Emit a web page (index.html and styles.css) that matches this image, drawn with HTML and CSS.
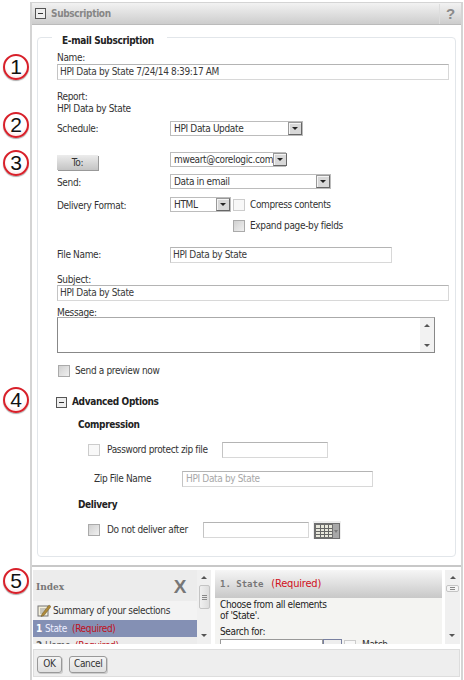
FILE: index.html
```html
<!DOCTYPE html>
<html lang="en">
<head>
<meta charset="utf-8">
<title>Subscription</title>
<link rel="stylesheet" href="styles.css">
</head>
<body>
<div class="callout c1">1</div>
<div class="callout c2">2</div>
<div class="callout c3">3</div>
<div class="callout c4">4</div>
<div class="callout c5">5</div>
<div class="dialog">
  <header class="titlebar">
    <span class="toggle"></span>
    <span class="title">Subscription</span>
    <span class="help">?</span>
  </header>
  <fieldset class="group">
    <legend>E-mail Subscription</legend>
    <div class="lbl name-lbl">Name:</div>
    <div class="input wide">HPI Data by State 7/24/14 8:39:17 AM</div>
    <div class="lbl report-lbl">Report:</div>
    <div class="lbl">HPI Data by State</div>

    <div class="row schedule-row">
      <span class="col">Schedule:</span>
      <div class="select s-schedule"><span>HPI Data Update</span><i class="drop"></i></div>
    </div>
    <div class="row to-row">
      <span class="col"><button class="to-btn">To:</button></span>
      <div class="select s-to"><span>mweart@corelogic.com</span><i class="drop"></i></div>
    </div>
    <div class="row send-row">
      <span class="col">Send:</span>
      <div class="select s-send"><span>Data in email</span><i class="drop"></i></div>
    </div>
    <div class="row format-row">
      <span class="col">Delivery Format:</span>
      <div class="select s-format"><span>HTML</span><i class="drop"></i></div>
      <i class="check light"></i><span class="check-text">Compress contents</span>
    </div>
    <div class="row expand-row">
      <span class="col"></span>
      <span class="spacer"></span>
      <i class="check"></i><span class="check-text">Expand page-by fields</span>
    </div>
    <div class="row file-row">
      <span class="col">File Name:</span>
      <div class="input filename">HPI Data by State</div>
    </div>
    <div class="lbl subject-lbl">Subject:</div>
    <div class="input wide">HPI Data by State</div>
    <div class="lbl message-lbl">Message:</div>
    <div class="textarea">
      <div class="ta-scroll"><i class="up"></i><i class="down"></i></div>
    </div>
    <div class="row preview-row">
      <i class="check"></i><span class="preview-text">Send a preview now</span>
    </div>
    <div class="row adv-row">
      <span class="toggle small"></span>
      <strong class="adv">Advanced Options</strong>
    </div>
    <div class="sub compression">Compression</div>
    <div class="row pw-row">
      <i class="check light"></i><span class="opt-text pw-text">Password protect zip file</span>
      <div class="input pw"></div>
    </div>
    <div class="row zip-row">
      <span class="zip-lbl">Zip File Name</span>
      <div class="input zip">HPI Data by State</div>
    </div>
    <div class="sub delivery">Delivery</div>
    <div class="row deliver-row">
      <i class="check"></i><span class="opt-text deliver-text">Do not deliver after</span>
      <div class="input date"></div>
      <button class="cal" aria-label="Calendar">
        <svg width="26" height="16" viewBox="0 0 26 16">
          <rect x="0" y="0" width="26" height="16" fill="#6f6f6f"/>
          <rect x="2" y="2" width="16" height="12" fill="#e8e8dc"/>
          <path d="M2 5.500H18M2 8.500H18M2 11.500H18M6.500 2V14M10.500 2V14M14.500 2V14" stroke="#666" stroke-width="1" fill="none"/>
          <rect x="19" y="1" width="6" height="14" fill="#a8a8a8"/>
          <path d="M20 7h4l-2 3z" fill="#7a7a7a"/>
        </svg>
      </button>
    </div>
  </fieldset>
  <div class="divider"></div>
  <section class="panels">
    <div class="index">
      <div class="index-head"><span class="index-title">Index</span><span class="close">X</span></div>
      <div class="item summary">
        <svg class="note" width="14" height="13" viewBox="0 0 14 13">
          <rect x="1" y="2" width="10" height="10" fill="#f4f0dc" stroke="#777"/>
          <path d="M3 5h6M3 7h6M3 9h4" stroke="#999"/>
          <path d="M5 10L12 1l2 1.500-7 9-3 1z" fill="#b08a3a" stroke="#6a5a2a" stroke-width=".5"/>
        </svg>
        <span>Summary of your selections</span>
      </div>
      <div class="item selected"><b>1</b><span class="st">State</span><span class="req">(Required)</span></div>
      <div class="item next"><b>2</b><span class="st">Home</span><span class="req">(Required)</span></div>
    </div>
    <div class="vscroll left-scroll"><i class="up"></i><i class="thumb"></i><i class="down"></i></div>
    <div class="detail">
      <div class="detail-head"><span class="detail-title">1. State</span><span class="req">(Required)</span></div>
      <div class="detail-text">Choose from all elements<br>of 'State'.</div>
      <div class="detail-search">Search for:</div>
      <div class="search-row">
        <div class="search-box"></div><div class="search-btn"></div><i class="check light"></i><span class="match">Match</span>
      </div>
    </div>
    <div class="vscroll right-scroll"><i class="up"></i><i class="thumb small"></i><i class="down"></i></div>
  </section>
  <footer class="footer">
    <button class="btn">OK</button>
    <button class="btn">Cancel</button>
  </footer>
</div>
</body>
</html>
```
FILE: styles.css
```css
html, body { margin: 0; padding: 0; }
body {
  width: 464px; height: 680px; overflow: hidden; position: relative;
  background: #fff; color: #333;
  font: 10px/12px "DejaVu Sans Condensed", "Liberation Sans", sans-serif;
  letter-spacing: -.35px;
}
i { display: block; flex: none; }
button { font: inherit; color: inherit; letter-spacing: inherit; padding: 0; margin: 0; }

.callout {
  position: absolute; left: 3px; width: 26px; height: 26px; box-sizing: border-box;
  border: 2px solid #d8202a; border-radius: 50%;
  background: radial-gradient(circle at 50% 40%, #fff 55%, #fbd0d0 100%);
  color: #111; font: 21px/22px "Liberation Sans", sans-serif; letter-spacing: 0; text-align: center;
  box-shadow: 0 1px 1px #aaa;
}
.c1 { top: 54px; }
.c2 { top: 112px; }
.c3 { top: 150px; }
.c4 { top: 387px; }
.c5 { top: 568px; }

.dialog {
  margin: 2px 1px 0 30px; width: 433px; height: 678px; box-sizing: border-box;
  border: solid #d4d4d4; border-width: 1px 2px 0 2px; overflow: hidden;
}
.titlebar {
  height: 22px; display: flex; align-items: center; padding-left: 3px;
  background: linear-gradient(#f2f2f2, #cdcdcd);
  border-bottom: 1px solid #bbb; box-sizing: border-box;
}
.toggle {
  width: 11px; height: 11px; box-sizing: border-box; border: 1px solid #555; background: #eee;
  position: relative; display: block; flex: none;
}
.toggle::after {
  content: ""; position: absolute; left: 2px; right: 2px; top: 4px; height: 1px; background: #333;
}
.title { margin-left: 5px; font-weight: 700; color: #868686; }
.help {
  margin-left: auto; width: 22px; text-align: center; font: 700 15px/20px "Liberation Sans", sans-serif;
  color: #8a8a8a; border-left: 1px solid #ddd; box-sizing: border-box;
}

.group {
  margin: 3px 4px 0 5px; padding: 0 0 0 19px; width: 419px; height: 529px; box-sizing: border-box;
  border: 1px solid #e2e6ea; border-radius: 4px; min-width: 0;
}
.group legend {
  margin-left: -5px; padding: 6px 13px 0 10px; font-weight: 700; color: #222; line-height: 13px;
}
.lbl { height: 12px; line-height: 12px; }
.name-lbl { margin-top: 5px; }
.input {
  height: 16px; line-height: 14px; box-sizing: border-box; padding-left: 2px;
  border: 1px solid #d8d8d8; border-top-color: #b4b4b4; border-left-color: #c4c4c4;
  background: #fff; white-space: nowrap; flex: none; color: #3a3a3a;
}
.wide { width: 392px; }
.report-lbl { margin-top: 11px; }

.row { display: flex; align-items: center; white-space: nowrap; }
.col { width: 113px; flex: none; }
.select {
  box-sizing: border-box; height: 15px; display: flex; align-items: center; justify-content: space-between;
  border: 1px solid #bcbcbc; padding-left: 3px; flex: none; background: #fff; line-height: 13px;
}
.drop {
  width: 14px; height: 13px; box-sizing: border-box; position: relative;
  background: #d8d8d8; border: 1px solid #777; border-color: #999 #666 #666 #999;
  box-shadow: inset 1px 1px 0 #f4f4f4;
}
.drop::after {
  content: ""; position: absolute; left: 3px; top: 4px;
  border: 3px solid transparent; border-top: 3px solid #222; border-bottom: 0;
}
.schedule-row { height: 15px; margin-top: 6px; }
.schedule-row .col { padding-top: 1px; }
.s-schedule { width: 133px; }
.to-row { height: 18px; margin-top: 16px; }
.to-row .select { margin-top: -4px; }
.to-btn {
  display: block; width: 41px; height: 15px; margin-top: 2px; line-height: 13px; text-align: center;
  border: 0; background: linear-gradient(#ececec, #c4c4c4);
  box-shadow: 1px 1px 0 #999;
}
.s-to { width: 116px; }
.send-row { height: 15px; margin-top: 4px; }
.send-row .col, .format-row .col { padding-top: 3px; }
.s-send { width: 161px; }
.format-row { height: 15px; margin-top: 8px; }
.s-format { width: 61px; }
.check {
  width: 12px; height: 12px; box-sizing: border-box; border: 1px solid #aaa;
  background: linear-gradient(135deg, #d0d0d0, #f0f0f0);
}
.check.light { border-color: #ccc; background: #f8f8f8; }
.format-row .check { margin-left: 2px; }
.check-text { margin-left: 5px; }
.expand-row { height: 12px; margin-top: 8px; }
.spacer { width: 63px; flex: none; }
.file-row { height: 16px; margin-top: 15px; }
.filename { width: 222px; }
.subject-lbl { margin-top: 11px; height: 11px; }
.message-lbl { margin-top: 6px; height: 10px; line-height: 12px; }
.textarea {
  width: 378px; height: 36px; box-sizing: border-box; border: 1px solid #888; border-top-color: #aaa;
  display: flex; justify-content: flex-end; background: #fff;
}
.ta-scroll {
  width: 14px; background: #f2f2f2; display: flex; flex-direction: column;
  justify-content: space-between; align-items: center; padding: 6px 0 5px;
}
.up, .down { width: 0; height: 0; border: 3px solid transparent; }
.up { border-top: 0; border-bottom: 3px solid #555; }
.down { border-bottom: 0; border-top: 3px solid #555; }
.preview-row { height: 12px; margin-top: 12px; padding-left: 1px; }
.preview-text { margin-left: 5px; }
.adv-row { height: 12px; margin-top: 19px; }
.toggle.small { margin-left: -1px; }
.adv { margin-left: 5px; color: #222; }
.sub { font-weight: 700; color: #222; margin-left: 21px; height: 12px; }
.compression { margin-top: 11px; }
.pw-row { height: 16px; margin-top: 11px; padding-left: 31px; }
.opt-text { margin-left: 7px; flex: none; }
.pw-text { width: 115px; }
.pw { width: 106px; }
.zip-row { height: 16px; margin-top: 13px; padding-left: 37px; }
.zip-lbl { width: 88px; flex: none; }
.zip { width: 191px; color: #a8a8a8; padding-left: 3px; }
.delivery { margin-top: 12px; }
.deliver-row { height: 18px; margin-top: 10px; padding-left: 31px; }
.deliver-text { width: 96px; }
.date { width: 106px; }
.cal {
  display: block; margin-left: 4px; width: 28px; height: 18px; border: 0; background: #eee; overflow: hidden;
  flex: none;
}
.cal svg { display: block; margin: 1px 0 0 1px; }

.divider { height: 2px; margin-top: 8px; background: #c8c8c8; }
.panels {
  display: flex; height: 74px; margin: 3px 0 0 1px; overflow: hidden; background: #fff;
}
.index { width: 164px; background: #ececec; flex: none; overflow: hidden; }
.index-head {
  height: 31px; display: flex; align-items: center; justify-content: space-between;
  padding: 2px 11px 0 3px; box-sizing: border-box;
}
.index-title { font: 700 9px/14px "DejaVu Serif", serif; color: #777; letter-spacing: 0; }
.close { font: 700 19px/20px "Liberation Sans", sans-serif; color: #777; }
.item { display: flex; align-items: center; padding-left: 3px; white-space: nowrap; }
.summary { height: 19px; background: #f3f3f3; color: #333; }
.note { margin: 0 2px 0 1px; flex: none; }
.selected { height: 17px; background: #8490b4; color: #eef; margin-bottom: 3px; }
.item b { margin-right: 3px; color: #fff; }
.next b { color: #555; }
.next .st { color: #555; }
.req { color: #c01020; margin-left: 5px; }
.next { height: 10px; overflow: hidden; align-items: flex-start; }
.vscroll {
  width: 14px; background: #f0f0f0; display: flex; flex-direction: column; align-items: center; flex: none;
  box-sizing: border-box; padding-top: 6px; position: relative;
}
.vscroll .down { position: absolute; bottom: 7px; left: 4px; }
.thumb {
  width: 11px; height: 24px; margin-top: 6px; box-sizing: border-box; border: 1px solid #c4c4c4; border-radius: 2px;
  background: linear-gradient(#888, #888) center 9px / 5px 1px no-repeat,
              linear-gradient(#888, #888) center 11px / 5px 1px no-repeat,
              linear-gradient(#888, #888) center 13px / 5px 1px no-repeat,
              linear-gradient(90deg, #f0f0f0, #ddd);
}
.thumb.small {
  width: 13px; height: 7px;
  background: linear-gradient(#888, #888) center 1px / 5px 1px no-repeat,
              linear-gradient(#888, #888) center 3px / 5px 1px no-repeat,
              #f4f4f4;
}
.left-scroll { margin-right: 4px; }
.detail { width: 227px; background: #f4f4f2; flex: none; overflow: hidden; }
.detail-head {
  height: 28px; display: flex; align-items: center; padding-left: 5px;
  background: linear-gradient(#f6f6f6, #c8c8c8);
}
.detail-title { font: 700 9px/14px "DejaVu Sans Mono", monospace; color: #777; letter-spacing: 0; }
.detail-head .req { margin-left: 8px; font-size: 11px; letter-spacing: -.2px; color: #d01020; }
.detail-text { padding: 1px 0 0 5px; line-height: 11px; color: #222; height: 27px; box-sizing: border-box; margin-bottom: 1px; }
.detail-search { padding-left: 5px; color: #222; line-height: 11px; }
.search-row { display: flex; align-items: flex-start; margin-top: 2px; padding-left: 5px; }
.search-box { width: 103px; height: 16px; box-sizing: border-box; border: 1px solid #999; background: #fff; flex: none; }
.search-btn { width: 19px; height: 16px; box-sizing: border-box; border: 1px solid #7880a0; background: #eee; flex: none; margin-right: 2px; }
.search-row .check { margin-top: 1px; }
.match { margin-left: 6px; }
.right-scroll { margin-left: 3px; width: 15px; }

.footer {
  height: 28px; margin: 5px 0 0 1px; width: 427px; box-sizing: border-box;
  background: #eee; border: 1px solid #ddd; display: flex; align-items: center; gap: 7px; padding: 2px 0 0 3px;
}
.btn {
  height: 17px; padding: 0 4px; line-height: 14px; box-sizing: border-box; border: 1px solid #999; border-radius: 3px;
  background: linear-gradient(#f4f4f4, #e0e0e0); box-shadow: 1px 1px 0 #ccc;
}
.btn:first-child { width: 25px; }
.btn:last-child { width: 38px; }
```
